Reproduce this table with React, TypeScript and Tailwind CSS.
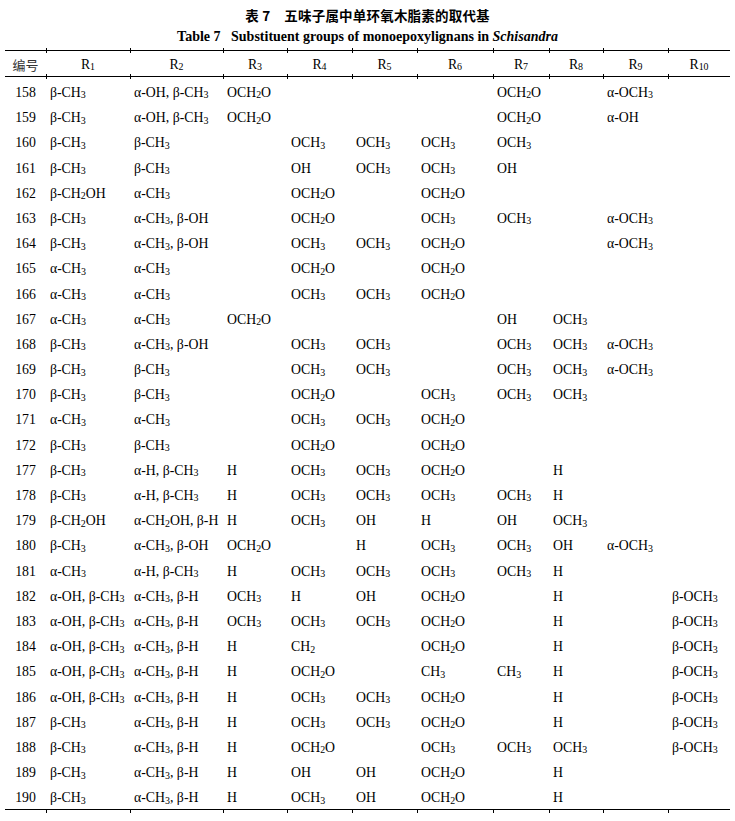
import React from 'react';

// column boundaries measured off the printed table
const GRID = 'grid grid-cols-[41px_84px_93px_64px_65px_65px_76px_56px_54px_65px_62px]';

const rows: string[][] = [
  ['158', 'β-CH3', 'α-OH, β-CH3', 'OCH2O', '', '', '', 'OCH2O', '', 'α-OCH3', ''],
  ['159', 'β-CH3', 'α-OH, β-CH3', 'OCH2O', '', '', '', 'OCH2O', '', 'α-OH', ''],
  ['160', 'β-CH3', 'β-CH3', '', 'OCH3', 'OCH3', 'OCH3', 'OCH3', '', '', ''],
  ['161', 'β-CH3', 'β-CH3', '', 'OH', 'OCH3', 'OCH3', 'OH', '', '', ''],
  ['162', 'β-CH2OH', 'α-CH3', '', 'OCH2O', '', 'OCH2O', '', '', '', ''],
  ['163', 'β-CH3', 'α-CH3, β-OH', '', 'OCH2O', '', 'OCH3', 'OCH3', '', 'α-OCH3', ''],
  ['164', 'β-CH3', 'α-CH3, β-OH', '', 'OCH3', 'OCH3', 'OCH2O', '', '', 'α-OCH3', ''],
  ['165', 'α-CH3', 'α-CH3', '', 'OCH2O', '', 'OCH2O', '', '', '', ''],
  ['166', 'α-CH3', 'α-CH3', '', 'OCH3', 'OCH3', 'OCH2O', '', '', '', ''],
  ['167', 'α-CH3', 'α-CH3', 'OCH2O', '', '', '', 'OH', 'OCH3', '', ''],
  ['168', 'β-CH3', 'α-CH3, β-OH', '', 'OCH3', 'OCH3', '', 'OCH3', 'OCH3', 'α-OCH3', ''],
  ['169', 'β-CH3', 'β-CH3', '', 'OCH3', 'OCH3', '', 'OCH3', 'OCH3', 'α-OCH3', ''],
  ['170', 'β-CH3', 'β-CH3', '', 'OCH2O', '', 'OCH3', 'OCH3', 'OCH3', '', ''],
  ['171', 'α-CH3', 'α-CH3', '', 'OCH3', 'OCH3', 'OCH2O', '', '', '', ''],
  ['172', 'β-CH3', 'β-CH3', '', 'OCH2O', '', 'OCH2O', '', '', '', ''],
  ['177', 'β-CH3', 'α-H, β-CH3', 'H', 'OCH3', 'OCH3', 'OCH2O', '', 'H', '', ''],
  ['178', 'β-CH3', 'α-H, β-CH3', 'H', 'OCH3', 'OCH3', 'OCH3', 'OCH3', 'H', '', ''],
  ['179', 'β-CH2OH', 'α-CH2OH, β-H', 'H', 'OCH3', 'OH', 'H', 'OH', 'OCH3', '', ''],
  ['180', 'β-CH3', 'α-CH3, β-OH', 'OCH2O', '', 'H', 'OCH3', 'OCH3', 'OH', 'α-OCH3', ''],
  ['181', 'α-CH3', 'α-H, β-CH3', 'H', 'OCH3', 'OCH3', 'OCH3', 'OCH3', 'H', '', ''],
  ['182', 'α-OH, β-CH3', 'α-CH3, β-H', 'OCH3', 'H', 'OH', 'OCH2O', '', 'H', '', 'β-OCH3'],
  ['183', 'α-OH, β-CH3', 'α-CH3, β-H', 'OCH3', 'OCH3', 'OCH3', 'OCH2O', '', 'H', '', 'β-OCH3'],
  ['184', 'α-OH, β-CH3', 'α-CH3, β-H', 'H', 'CH2', '', 'OCH2O', '', 'H', '', 'β-OCH3'],
  ['185', 'α-OH, β-CH3', 'α-CH3, β-H', 'H', 'OCH2O', '', 'CH3', 'CH3', 'H', '', 'β-OCH3'],
  ['186', 'α-OH, β-CH3', 'α-CH3, β-H', 'H', 'OCH3', 'OCH3', 'OCH2O', '', 'H', '', 'β-OCH3'],
  ['187', 'β-CH3', 'α-CH3, β-H', 'H', 'OCH3', 'OCH3', 'OCH2O', '', 'H', '', 'β-OCH3'],
  ['188', 'β-CH3', 'α-CH3, β-H', 'H', 'OCH2O', '', 'OCH3', 'OCH3', 'OCH3', '', 'β-OCH3'],
  ['189', 'β-CH3', 'α-CH3, β-H', 'H', 'OH', 'OH', 'OCH2O', '', 'H', '', ''],
  ['190', 'β-CH3', 'α-CH3, β-H', 'H', 'OCH3', 'OH', 'OCH2O', '', 'H', '', ''],
];

// digits inside a formula are always subscripts
const Chem: React.FC<{ text: string }> = ({ text }) => (
  <>
    {text.split(/(\d+)/).map((part, i) =>
      i % 2 === 1 ? (
        <sub key={i} className="text-[0.72em] -bottom-[0.15em]">
          {part}
        </sub>
      ) : (
        <React.Fragment key={i}>{part}</React.Fragment>
      )
    )}
  </>
);

const Rule: React.FC<{ bottom?: boolean }> = ({ bottom }) => (
  <div className={GRID}>
    {Array.from({ length: 11 }).map((_, i) => (
      <div
        key={i}
        className={
          bottom
            ? `h-[4px] bg-[linear-gradient(#000,#000)] bg-no-repeat bg-[length:100%_1px] bg-top ${i > 0 ? 'border-l border-black' : ''}`
            : `h-[5px] bg-[linear-gradient(#000,#000)] bg-no-repeat bg-[length:100%_1px] bg-center ${i > 0 ? 'border-l border-black' : ''}`
        }
      />
    ))}
  </div>
);

const headers = ['R1', 'R2', 'R3', 'R4', 'R5', 'R6', 'R7', 'R8', 'R9', 'R10'];

export default function App() {
  return (
    <div className="w-[735px] h-[821px] bg-white text-black font-['Liberation_Serif','Noto_Sans_CJK_SC',serif]">
      <div className="pt-[6px] text-center text-[13.5px] leading-[18px] font-bold tracking-[0.2px] font-['Noto_Sans_CJK_SC',sans-serif]">
        表 7<span className="ml-[14px]">五味子属中单环氧木脂素的取代基</span>
      </div>
      <div className="mt-[4px] text-center text-[14px] leading-[18px] font-bold whitespace-pre">
        {'Table 7   Substituent groups of monoepoxylignans in '}
        <i>Schisandra</i>
      </div>

      <div className="mt-[2px] ml-[5px] w-[725px]">
        <Rule />
        <div className={`${GRID} h-[21px] pt-[3px] text-[13.8px] leading-[18px]`}>
          <div className="text-center text-[13px] text-[#333] font-['Noto_Sans_CJK_SC',sans-serif]">编号</div>
          {headers.map((h) => (
            <div key={h} className="text-center">
              <Chem text={h} />
            </div>
          ))}
        </div>
        <Rule />
        <div>
          {rows.map((row) => (
            <div key={row[0]} className={`${GRID} h-[25.2px] text-[13.8px] leading-[28px] whitespace-nowrap`}>
              {row.map((cell, j) => (
                <div key={j} className={j === 0 ? 'text-center' : 'pl-[4px]'}>
                  {j === 0 ? cell : <Chem text={cell} />}
                </div>
              ))}
            </div>
          ))}
        </div>
        <Rule bottom />
      </div>
    </div>
  );
}
